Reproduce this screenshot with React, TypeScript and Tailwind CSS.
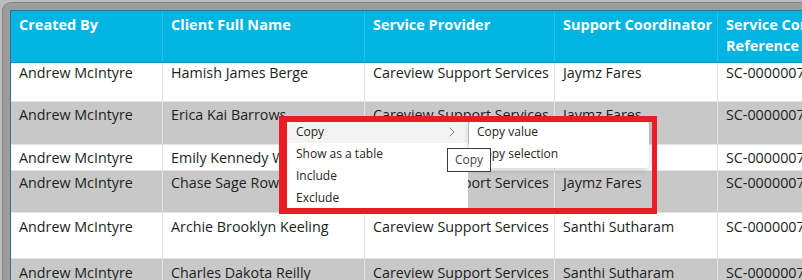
import { ChevronRight } from "lucide-react";

const cols = [
  { w: "w-[152px]", head: ["Created By"] },
  { w: "w-[202px]", head: ["Client Full Name"] },
  { w: "w-[190px]", head: ["Service Provider"] },
  { w: "w-[163px]", head: ["Support Coordinator"] },
  { w: "w-[200px]", head: ["Service Contract", "Reference Number"] },
];

const rows = [
  { h: "h-[39px]", pt: "pt-0", bg: "bg-white", cells: ["Andrew McIntyre", "Hamish James Berge", "Careview Support Services", "Jaymz Fares", "SC-00000071"] },
  { h: "h-[43px]", pt: "pt-[3px]", bg: "bg-[#c8c8c8]", cells: ["Andrew McIntyre", "Erica Kai Barrows", "Careview Support Services", "Jaymz Fares", "SC-00000072"] },
  { h: "h-[26px]", pt: "pt-[3px]", bg: "bg-white", cells: ["Andrew McIntyre", "Emily Kennedy Walsh", "Careview Support Services", "Jaymz Fares", "SC-00000073"] },
  { h: "h-[42px]", pt: "pt-[2px]", bg: "bg-[#c8c8c8]", cells: ["Andrew McIntyre", "Chase Sage Rowe", "Careview Support Services", "Jaymz Fares", "SC-00000074"] },
  { h: "h-[46px]", pt: "pt-[4px]", bg: "bg-white", cells: ["Andrew McIntyre", "Archie Brooklyn Keeling", "Careview Support Services", "Santhi Sutharam", "SC-00000075"] },
  { h: "h-[46px]", pt: "pt-[4px]", bg: "bg-[#c8c8c8]", cells: ["Andrew McIntyre", "Charles Dakota Reilly", "Careview Support Services", "Santhi Sutharam", "SC-00000076"] },
];

export default function App() {
  return (
    <div
      className="relative w-[802px] h-[280px] overflow-hidden bg-[#bdbdbd]"
      style={{ fontFamily: '"Segoe UI", "Open Sans", sans-serif' }}
    >
      <div className="ml-[2px] mt-[2px] h-full rounded-tl-[9px] border-l border-t border-[#858585] bg-[#9c9c9c] pl-[7px] pt-[7px]">
        {/* table */}
        <div className="h-full border-l border-t border-[#2a6f9c] bg-white">
          {/* header */}
          <div className="flex h-[52px] border-b border-[#1593bb] bg-[#01b4e1]">
            {cols.map((c, i) => (
              <div
                key={i}
                className={`${c.w} shrink-0 border-r border-[#2cc0e6] px-2 pt-[3px] text-[14.5px] font-bold leading-[21px] text-white whitespace-nowrap`}
              >
                {c.head.map((l) => (
                  <div key={l}>{l}</div>
                ))}
              </div>
            ))}
          </div>
          {/* body */}
          {rows.map((r, ri) => (
            <div key={ri} className={`flex ${r.h} ${r.bg} border-b border-[#e4e4e4]`}>
              {r.cells.map((t, ci) => (
                <div
                  key={ci}
                  className={`${cols[ci].w} shrink-0 border-r border-[#e4e4e4] px-2 ${r.pt} text-[14.3px] leading-[20px] text-[#201f1e] whitespace-nowrap overflow-hidden`}
                >
                  {t}
                </div>
              ))}
            </div>
          ))}
        </div>
      </div>

      {/* context menu */}
      <div className="absolute left-[284px] top-[116px] w-[184px] h-[96px] bg-white pt-[5px] text-[12px] leading-[22px] text-[#252423]">
        <div className="flex items-center justify-between bg-[#f3f3f3] pl-[12px] pr-[8px]">
          <span>Copy</span>
          <ChevronRight className="h-[16px] w-[16px] text-[#605e5c]" strokeWidth={1.2} />
        </div>
        <div className="pl-[12px]">Show as a table</div>
        <div className="pl-[12px]">Include</div>
        <div className="pl-[12px]">Exclude</div>
      </div>

      {/* submenu */}
      <div className="absolute left-[469px] top-[121px] w-[180px] rounded-[4px] bg-white pb-[3px] text-[12px] leading-[22px] text-[#252423] shadow-[0_2px_6px_rgba(0,0,0,0.18)]">
        <div className="pl-[8px]">Copy value</div>
        <div className="pl-[8px]">Copy selection</div>
      </div>

      {/* tooltip */}
      <div className="absolute left-[447px] top-[148px] flex h-[24px] w-[44px] items-center justify-center border border-[#3b3b3b] bg-white text-[12px] text-[#444]">
        Copy
      </div>

      {/* red highlight box */}
      <div className="pointer-events-none absolute left-[279px] top-[116px] h-[98px] w-[378px] border-b-[6px] border-l-[8px] border-r-[5px] border-t-[6px] border-[#ec1c24]" />
    </div>
  );
}
